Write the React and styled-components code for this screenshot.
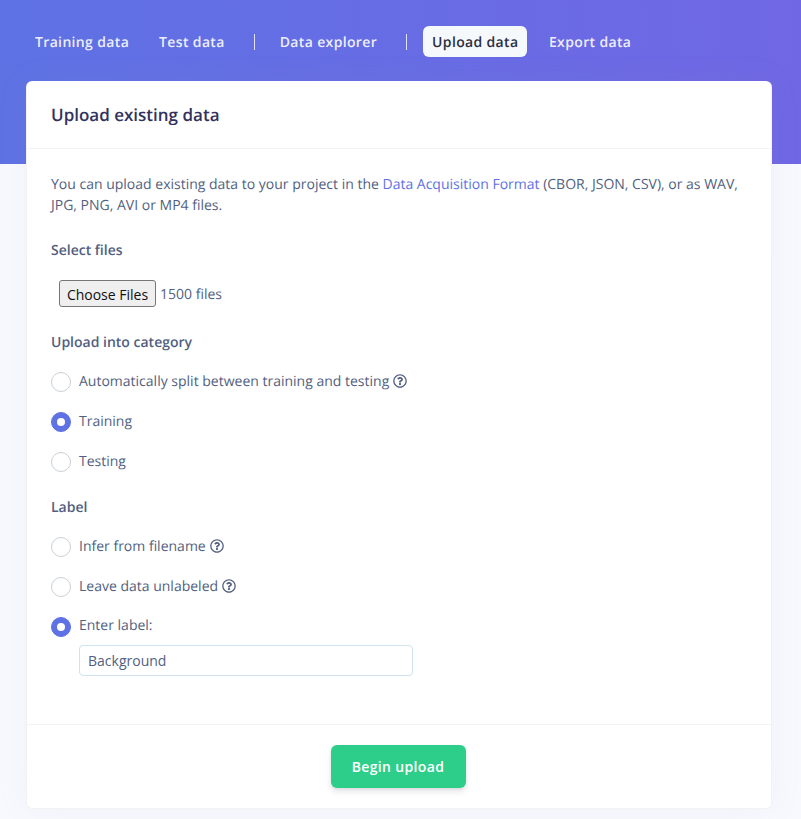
import React from 'react';
import styled, { createGlobalStyle } from 'styled-components';
import { FaRegQuestionCircle } from 'react-icons/fa';

const Global = createGlobalStyle`
  html, body { margin: 0; padding: 0; background: #f8f9fe; }
  body { font-family: "Open Sans", sans-serif; font-size: 14px; color: #525f7f; overflow: hidden; text-rendering: geometricPrecision; }
  * { box-sizing: border-box; }
`;

const Page = styled.div`
  width: 801px;
  height: 819px;
  overflow: hidden;
`;

const Hero = styled.header`
  height: 164px;
  padding: 26px 26px 0;
  background: linear-gradient(87deg, #5e72e4 0, #7067e4 100%);
`;

const Nav = styled.nav`
  display: flex;
  align-items: center;
  gap: 12px;
`;

const NavItem = styled.a`
  display: block;
  height: 31px;
  padding: 0 9px;
  margin-left: ${p => p.$nudge || 0}px;
  border-radius: 6px;
  font-size: 14px;
  font-weight: 600;
  line-height: 33px;
  letter-spacing: 0.35px;
  color: ${p => (p.$active ? '#2b2f3f' : 'rgba(255,255,255,0.9)')};
  background: ${p => (p.$active ? '#f6f9fc' : 'transparent')};
`;

const Divider = styled.span`
  width: 1px;
  height: 16px;
  margin: 0 ${p => p.$right}px 0 ${p => p.$left}px;
  background: rgba(255,255,255,0.8);
`;

const Card = styled.section`
  width: 746px;
  height: 728px;
  margin: -83px 0 0 26px;
  background: #fff;
  border: 1px solid rgba(0,0,0,0.05);
  border-top: 0;
  border-radius: 6px;
  box-shadow: 0 0 2rem 0 rgba(136,152,170,0.08);
  display: flex;
  flex-direction: column;
`;

const CardHeader = styled.div`
  height: 68px;
  padding: 0 24px;
  display: flex;
  align-items: center;
  border-bottom: 1px solid rgba(0,0,0,0.05);
`;

const Title = styled.h3`
  margin: 0;
  font-size: 17px;
  font-weight: 600;
  color: #32325d;
`;

const CardBody = styled.div`
  flex: 1;
  padding: 25px 24px 0;
`;

const Intro = styled.p`
  margin: 0;
  font-size: 14px;
  line-height: 21px;
  color: #525f7f;
`;

const Link = styled.a`
  color: #5e72e4;
`;

const SectionLabel = styled.div`
  font-size: 14px;
  font-weight: 600;
  line-height: 21px;
  color: #525f7f;
  margin-top: ${p => p.$top}px;
`;

const FileRow = styled.div`
  display: flex;
  align-items: center;
  margin: 19px 0 0 8px;
  height: 27px;
  gap: 4px;
`;

const FileButton = styled.button`
  width: 97px;
  height: 27px;
  padding: 1px 0 0;
  background: #efefef;
  border: 1px solid #767676;
  border-radius: 3px;
  font-family: "Open Sans", sans-serif;
  font-size: 14px;
  color: #111;
`;

const FileCount = styled.span`
  font-size: 14px;
  padding-top: 2px;
  color: #525f7f;
`;

const RadioGroup = styled.div`
  display: flex;
  flex-direction: column;
  gap: 20px;
  margin-top: ${p => p.$top}px;
`;

const RadioRow = styled.div`
  display: flex;
  align-items: center;
  height: 20px;
  gap: 8px;
`;

const RadioMark = styled.span`
  flex: none;
  width: 20px;
  height: 20px;
  border-radius: 50%;
  background: ${p => (p.$on ? '#5e72e4' : '#fff')};
  border: 1px solid ${p => (p.$on ? '#5e72e4' : '#cad1d7')};
  display: flex;
  align-items: center;
  justify-content: center;
  &::after {
    content: '';
    display: ${p => (p.$on ? 'block' : 'none')};
    width: 8px;
    height: 8px;
    border-radius: 50%;
    background: #fff;
  }
`;

const RadioText = styled.span`
  display: inline-flex;
  align-items: center;
  gap: 4px;
  font-size: 14px;
  line-height: 21px;
  margin-top: ${p => (p.$raised ? -4 : -2)}px;
  color: #525f7f;
`;

const LabelInput = styled.input`
  display: block;
  width: 334px;
  height: 31px;
  margin: 8px 0 0 28px;
  padding: 0 8px;
  border: 1px solid #cfe2ee;
  border-radius: 4px;
  outline: none;
  background: #fff;
  font-family: "Open Sans", sans-serif;
  font-size: 14px;
  color: #525f7f;
`;

const CardFooter = styled.div`
  height: 84px;
  padding-top: 20px;
  display: flex;
  justify-content: center;
  border-top: 1px solid rgba(0,0,0,0.05);
`;

const Submit = styled.button`
  width: 135px;
  height: 43px;
  margin-right: 2px;
  border: 0;
  border-radius: 6px;
  background: #2dce89;
  color: #fff;
  font-family: "Open Sans", sans-serif;
  font-size: 14px;
  font-weight: 600;
  letter-spacing: 0.35px;
  box-shadow: 0 4px 6px rgba(50,50,93,0.11), 0 1px 3px rgba(0,0,0,0.08);
`;

const Help = () => <FaRegQuestionCircle size={14} color="#525f7f" />;

const Radio = ({ on, raised, children }) => (
  <RadioRow>
    <RadioMark $on={on} />
    <RadioText $raised={raised}>{children}</RadioText>
  </RadioRow>
);

export default function App() {
  return (
    <Page>
      <Global />
      <Hero>
        <Nav>
          <NavItem>Training data</NavItem>
          <NavItem>Test data</NavItem>
          <Divider $left={8} $right={4} />
          <NavItem>Data explorer</NavItem>
          <Divider $left={8} $right={4} />
          <NavItem $active>Upload data</NavItem>
          <NavItem $nudge={0.5}>Export data</NavItem>
        </Nav>
      </Hero>
      <Card>
        <CardHeader>
          <Title>Upload existing data</Title>
        </CardHeader>
        <CardBody>
          <Intro>
            You can upload existing data to your project in the <Link>Data Acquisition Format</Link> (CBOR, JSON, CSV), or as WAV, JPG, PNG, AVI or MP4 files.
          </Intro>
          <SectionLabel $top={24}>Select files</SectionLabel>
          <FileRow>
            <FileButton type="button">Choose Files</FileButton>
            <FileCount>1500 files</FileCount>
          </FileRow>
          <SectionLabel $top={25}>Upload into category</SectionLabel>
          <RadioGroup $top={19}>
            <Radio>Automatically split between training and testing <Help /></Radio>
            <Radio on>Training</Radio>
            <Radio>Testing</Radio>
          </RadioGroup>
          <SectionLabel $top={25}>Label</SectionLabel>
          <RadioGroup $top={19}>
            <Radio>Infer from filename <Help /></Radio>
            <Radio>Leave data unlabeled <Help /></Radio>
            <Radio on raised>Enter label:</Radio>
          </RadioGroup>
          <LabelInput defaultValue="Background" />
        </CardBody>
        <CardFooter>
          <Submit type="button">Begin upload</Submit>
        </CardFooter>
      </Card>
    </Page>
  );
}
